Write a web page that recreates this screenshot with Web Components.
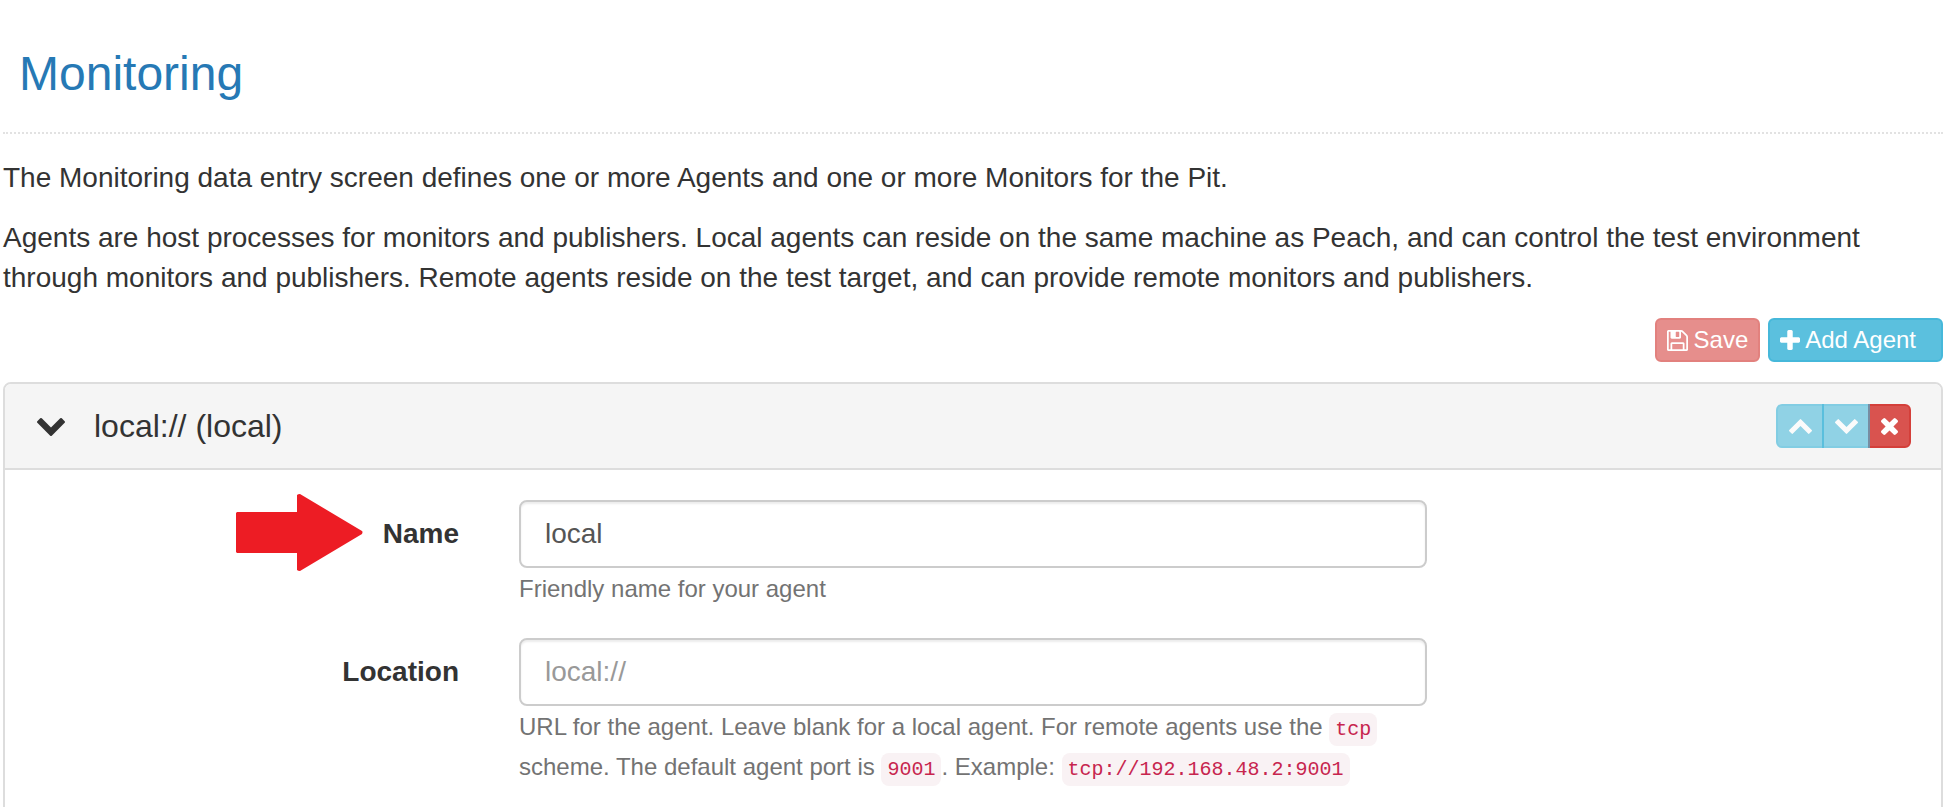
<!DOCTYPE html>
<html lang="en">
<head>
<meta charset="utf-8">
<title>Monitoring</title>
<style>
  body { margin: 0; background: #fff; color: #333; font: 28px/40px "Liberation Sans", Arial, sans-serif; }
  p { margin: 0 0 20px; }
  code { padding: 5px 6px; border-radius: 8px; background: #f9f2f4; color: #c7254e; font: 20px "Liberation Mono", monospace; }
</style>
</head>
<body>
<monitoring-page>
  <page-header>Monitoring</page-header>
  <p>The Monitoring data entry screen defines one or more Agents and one or more Monitors for the Pit.</p>
  <p>Agents are host processes for monitors and publishers. Local agents can reside on the same machine as Peach, and can control the test environment through monitors and publishers. Remote agents reside on the test target, and can provide remote monitors and publishers.</p>
  <page-toolbar></page-toolbar>
  <agent-panel heading="local:// (local)">
    <form-field label="Name" value="local" pointed>Friendly name for your agent</form-field>
    <form-field label="Location" placeholder="local://">URL for the agent. Leave blank for a local agent. For remote agents use the <code>tcp</code> scheme. The default agent port is <code>9001</code>. Example: <code>tcp://192.168.48.2:9001</code></form-field>
  </agent-panel>
</monitoring-page>

<script>
const ICONS = {
  save: ['128 128 1536 1536', 'M512 1536h768v-384h-768v384zm896 0h128v-896q0-14-10-38.5t-20-34.5l-281-281q-10-10-34-20t-39-10v416q0 40-28 68t-68 28h-576q-40 0-68-28t-28-68v-416h-128v1280h128v-416q0-40 28-68t68-28h832q40 0 68 28t28 68v416zm-384-928v-320q0-13-9.5-22.5t-22.5-9.5h-192q-13 0-22.5 9.5t-9.5 22.5v320q0 13 9.5 22.5t22.5 9.5h192q13 0 22.5-9.5t9.5-22.5zm640 32v928q0 40-28 68t-68 28h-1344q-40 0-68-28t-28-68v-1344q0-40 28-68t68-28h928q40 0 88 20t76 48l280 280q28 28 48 76t20 88z'],
  plus: ['192 128 1408 1408', 'M1600 736v192q0 40-28 68t-68 28h-416v416q0 40-28 68t-68 28h-192q-40 0-68-28t-28-68v-416h-416q-40 0-68-28t-28-68v-192q0-40 28-68t68-28h416v-416q0-40 28-68t68-28h192q40 0 68 28t28 68v416h416q40 0 68 28t28 68z'],
  down: ['90 533 1612 1035', 'M1683 808l-742 741q-19 19-45 19t-45-19l-742-741q-19-19-19-45.5t19-45.5l166-165q19-19 45-19t45 19l531 531 531-531q19-19 45-19t45 19l166 165q19 19 19 45.5t-19 45.5z'],
  up: ['90 480 1612 1035', 'M1683 1331l-166 165q-19 19-45 19t-45-19l-531-531-531 531q-19 19-45 19t-45-19l-166-165q-19-19-19-45.5t19-45.5l742-741q19-19 45-19t45 19l742 741q19 19 19 45.5t-19 45.5z'],
  close: ['302 366 1188 1188', 'M1490 1322q0 40-28 68l-136 136q-28 28-68 28t-68-28l-294-294-294 294q-28 28-68 28t-68-28l-136-136q-28-28-28-68t28-68l294-294-294-294q-28-28-28-68t28-68l136-136q28-28 68-28t68 28l294 294 294-294q28-28 68-28t68 28l136 136q28 28 28 68t-28 68l-294 294 294 294q28 28 28 68z']
};

const icon = (name, width, height = width) =>
  `<svg aria-hidden="true" width="${width}" height="${height}" viewBox="${ICONS[name][0]}" fill="currentColor"><path d="${ICONS[name][1]}"/></svg>`;

const BUTTON_CSS = `
  button { display: flex; align-items: center; gap: 6px; box-sizing: border-box; height: 44px; margin: 0;
    padding: 0 10px; border: 2px solid #46b8da; border-radius: 6px; background: #5bc0de; color: #fff;
    font: 24px/36px "Liberation Sans", Arial, sans-serif; cursor: pointer; }
  button svg { display: block; flex: none; }
  button.danger { background: #d9534f; border-color: #d43f3a; }
  button:disabled { opacity: .65; cursor: not-allowed; }`;

class ShadowElement extends HTMLElement {
  connectedCallback() {
    if (!this.shadowRoot) this.attachShadow({ mode: 'open' }).innerHTML = this.render();
  }
}

customElements.define('monitoring-page', class extends ShadowElement {
  render() {
    return `<style>:host { display: block; padding: 0 4px 0 3px; }</style><slot></slot>`;
  }
});

customElements.define('page-header', class extends ShadowElement {
  render() {
    return `<style>
      :host { display: block; margin-bottom: 24px; padding: 45px 16px 29px; border-bottom: 2px dotted #e2e2e2; }
      h1 { margin: 0; color: #2679b5; font-size: 48px; line-height: 58px; font-weight: 400; }
    </style><h1><slot></slot></h1>`;
  }
});

customElements.define('page-toolbar', class extends ShadowElement {
  render() {
    return `<style>
      ${BUTTON_CSS}
      :host { display: flex; justify-content: flex-end; gap: 8px; margin-bottom: 20px; }
      .add { gap: 5px; padding-right: 25px; }
    </style>
    <button type="button" class="danger" disabled>${icon('save', 21)}Save</button>
    <button type="button" class="add">${icon('plus', 20)}Add Agent</button>`;
  }
});

customElements.define('agent-panel', class extends ShadowElement {
  render() {
    return `<style>
      ${BUTTON_CSS}
      :host { display: block; border: 2px solid #ddd; border-radius: 8px; }
      header { display: flex; align-items: center; padding: 20px 30px; border-bottom: 2px solid #ddd;
        border-radius: 6px 6px 0 0; background: #f5f5f5; }
      .toggle { padding: 2px 2px 0; border: 0; background: none; color: #333; }
      h2 { flex: 1; margin: 0 0 0 27px; font-size: 32px; line-height: 44px; font-weight: 400; }
      .actions { display: flex; }
      .actions button { justify-content: center; width: 48px; padding: 0; }
      .actions button + button { margin-left: -2px; border-top-left-radius: 0; border-bottom-left-radius: 0; }
      .actions button:not(:last-child) { border-top-right-radius: 0; border-bottom-right-radius: 0; }
      .actions .danger { width: 43px; }
      .body { display: grid; gap: 29px; padding: 30px 0; }
    </style>
    <header>
      <button type="button" class="toggle" aria-label="Collapse agent">${icon('down', 28, 18)}</button>
      <h2></h2>
      <div class="actions">
        <button type="button" disabled aria-label="Move up">${icon('up', 23, 15)}</button>
        <button type="button" disabled aria-label="Move down">${icon('down', 23, 15)}</button>
        <button type="button" class="danger" aria-label="Remove agent">${icon('close', 17)}</button>
      </div>
    </header>
    <div class="body"><slot></slot></div>`;
  }
  connectedCallback() {
    super.connectedCallback();
    this.shadowRoot.querySelector('h2').textContent = this.getAttribute('heading');
  }
});

customElements.define('form-field', class extends ShadowElement {
  render() {
    const arrow = this.hasAttribute('pointed')
      ? `<svg class="arrow" aria-hidden="true" width="127" height="77" viewBox="0 0 127 77"><path fill="#ed1c24" d="M1 18H61V1Q62 0 64 0L126 37Q127 38 126 40L64 77Q62 77 61 76V59H1L0 58V19Z"/></svg>` : '';
    return `<style>
      :host { display: grid; grid-template-columns: 1fr 2fr 1fr; }
      .label { padding: 14px 30px 0; text-align: right; }
      label { position: relative; display: inline-block; font-weight: 700; }
      .arrow { position: absolute; right: 100%; top: 50%; margin: -40px 20px 0 0; }
      .control { min-width: 0; padding: 0 30px; }
      input { display: block; box-sizing: border-box; width: 100%; height: 68px; margin: 0; padding: 0 24px;
        border: 2px solid #ccc; border-radius: 8px; background: #fff; color: #555; outline: 0;
        box-shadow: inset 0 2px 2px rgba(0,0,0,.075); font: 28px/40px "Liberation Sans", Arial, sans-serif; }
      input::placeholder { color: #999; opacity: 1; }
      .help { padding-top: 1px; color: #737373; font-size: 24px; line-height: 40px; }
    </style>
    <div class="label"><label for="control">${this.getAttribute('label')}${arrow}</label></div>
    <div class="control">
      <input id="control" type="text" aria-describedby="help" value="${this.getAttribute('value') || ''}" placeholder="${this.getAttribute('placeholder') || ''}">
      <div class="help" id="help"><slot></slot></div>
    </div>`;
  }
});
</script>
</body>
</html>
